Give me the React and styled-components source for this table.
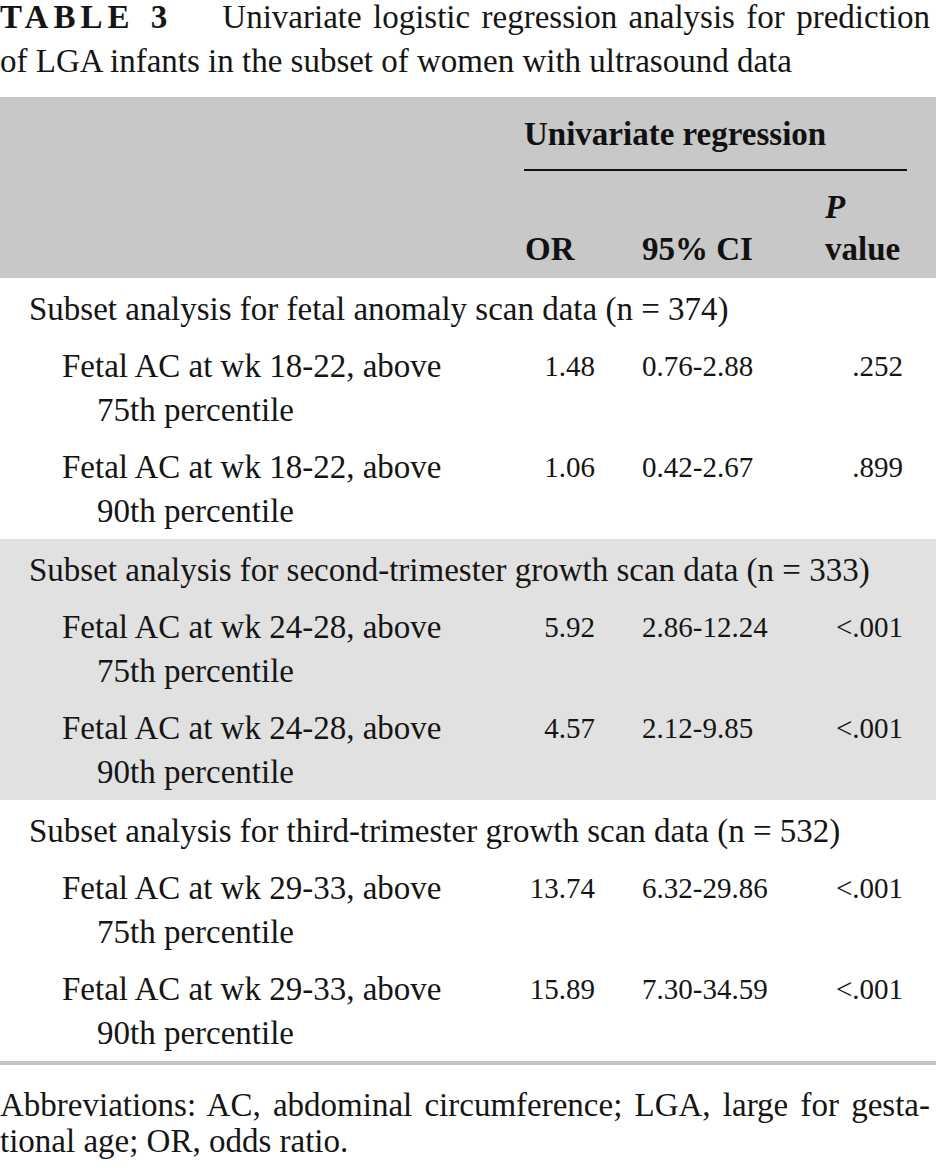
import React from 'react';
import styled, { createGlobalStyle } from 'styled-components';

const GlobalStyle = createGlobalStyle`
  html, body {
    margin: 0;
    padding: 0;
    background: #fff;
  }
  body {
    font-family: "Liberation Serif", "Times New Roman", serif;
    color: #151515;
  }
`;

const Page = styled.div`
  width: 936px;
`;

const Caption = styled.div`
  margin: 0 0 17px;
  font-size: 33px;
`;

const CaptionLine = styled.div`
  line-height: ${(p) => (p.$first ? '34px' : '38px')};
  padding-top: ${(p) => (p.$first ? '0' : '8px')};
  text-align: ${(p) => (p.$first ? 'justify' : 'left')};
  text-align-last: ${(p) => (p.$first ? 'justify' : 'auto')};
  padding-right: ${(p) => (p.$first ? '6px' : '0')};
`;

const TableLabel = styled.span`
  font-weight: bold;
  letter-spacing: 5px;
  margin-right: 50px;
`;

const TableWrap = styled.div`
  border-bottom: 4px solid #c4c4c4;
`;

const Table = styled.table`
  width: 936px;
  table-layout: fixed;
  border-collapse: collapse;
  border-spacing: 0;
`;

const Head = styled.thead`
  background: #c8c8c8;
  font-weight: bold;
  font-size: 33px;
  line-height: 42px;
  color: #111;
`;

const HeadCell = styled.th`
  padding: 0;
  font-weight: bold;
  text-align: left;
  vertical-align: bottom;
`;

const GroupHeadCell = styled(HeadCell)`
  padding: 16px 29px 0 24px;
`;

const GroupRule = styled.div`
  padding-bottom: 14px;
  border-bottom: 2px solid #111;
`;

const ColHeadCell = styled(HeadCell)`
  padding: 15px 0 8px ${(p) => p.$indent}px;
`;

const Italic = styled.span`
  font-style: italic;
`;

const Section = styled.tbody`
  background: ${(p) => (p.$shaded ? '#e1e1e1' : '#fff')};
  font-size: 33px;
  line-height: 44px;
`;

const SectionTitle = styled.td`
  padding: 9px 0 6px 29px;
  white-space: nowrap;
`;

const LabelCell = styled.td`
  padding: 7px 0 6px 97px;
  text-indent: -35px;
  vertical-align: top;
  white-space: nowrap;
`;

const NumCell = styled.td`
  padding: 7px ${(p) => p.$pr || 0}px 6px ${(p) => p.$pl || 0}px;
  text-align: ${(p) => p.$align};
  vertical-align: top;
  font-size: 29px;
  white-space: nowrap;
`;

const Footnote = styled.div`
  margin-top: 22px;
  font-size: 33px;
  line-height: 36px;
`;

const FootLine = styled.div`
  text-align: ${(p) => (p.$justify ? 'justify' : 'left')};
  text-align-last: ${(p) => (p.$justify ? 'justify' : 'auto')};
  padding-right: ${(p) => (p.$justify ? '6px' : '0')};
`;

const sections = [
  {
    title: 'Subset analysis for fetal anomaly scan data (n = 374)',
    shaded: false,
    rows: [
      { wk: '18-22', pct: '75th', or: '1.48', ci: '0.76-2.88', p: '.252' },
      { wk: '18-22', pct: '90th', or: '1.06', ci: '0.42-2.67', p: '.899' },
    ],
  },
  {
    title: 'Subset analysis for second-trimester growth scan data (n = 333)',
    shaded: true,
    rows: [
      { wk: '24-28', pct: '75th', or: '5.92', ci: '2.86-12.24', p: '<.001' },
      { wk: '24-28', pct: '90th', or: '4.57', ci: '2.12-9.85', p: '<.001' },
    ],
  },
  {
    title: 'Subset analysis for third-trimester growth scan data (n = 532)',
    shaded: false,
    rows: [
      { wk: '29-33', pct: '75th', or: '13.74', ci: '6.32-29.86', p: '<.001' },
      { wk: '29-33', pct: '90th', or: '15.89', ci: '7.30-34.59', p: '<.001' },
    ],
  },
];

const App = () => {
  return (
    <Page>
      <GlobalStyle />
      <Caption>
        <CaptionLine $first>
          <TableLabel>TABLE 3</TableLabel>Univariate logistic regression analysis for prediction
        </CaptionLine>
        <CaptionLine>of LGA infants in the subset of women with ultrasound data</CaptionLine>
      </Caption>

      <TableWrap>
        <Table>
          <colgroup>
            <col style={{ width: 500 }} />
            <col style={{ width: 95 }} />
            <col style={{ width: 215 }} />
            <col style={{ width: 126 }} />
          </colgroup>
          <Head>
            <tr>
              <HeadCell />
              <GroupHeadCell colSpan={3}>
                <GroupRule>Univariate regression</GroupRule>
              </GroupHeadCell>
            </tr>
            <tr>
              <HeadCell />
              <ColHeadCell $indent={25}>OR</ColHeadCell>
              <ColHeadCell $indent={47}>95% CI</ColHeadCell>
              <ColHeadCell $indent={15}>
                <Italic>P</Italic>
                <br />
                value
              </ColHeadCell>
            </tr>
          </Head>

          {sections.map((s) => (
            <Section key={s.title} $shaded={s.shaded}>
              <tr>
                <SectionTitle colSpan={4}>{s.title}</SectionTitle>
              </tr>
              {s.rows.map((r) => (
                <tr key={r.pct}>
                  <LabelCell>
                    Fetal AC at wk {r.wk}, above
                    <br />
                    {r.pct} percentile
                  </LabelCell>
                  <NumCell $align="right">{r.or}</NumCell>
                  <NumCell $align="left" $pl={47}>{r.ci}</NumCell>
                  <NumCell $align="right" $pr={33}>{r.p}</NumCell>
                </tr>
              ))}
            </Section>
          ))}
        </Table>
      </TableWrap>

      <Footnote>
        <FootLine $justify>
          Abbreviations: AC, abdominal circumference; LGA, large for gesta-
        </FootLine>
        <FootLine>tional age; OR, odds ratio.</FootLine>
      </Footnote>
    </Page>
  );
};

export default App;
